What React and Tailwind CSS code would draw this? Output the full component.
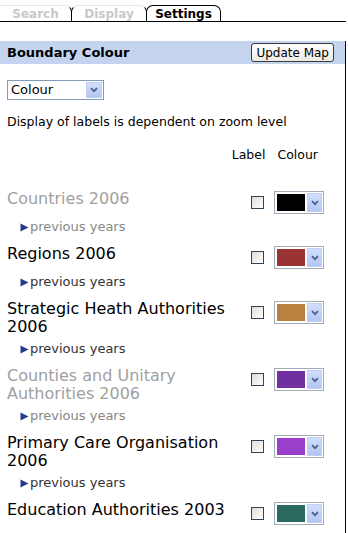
import React from 'react';

const layers = [
  { name: ['Countries 2006'], on: false, color: '#000000' },
  { name: ['Regions 2006'], on: true, color: '#9a3334' },
  { name: ['Strategic Heath Authorities', '2006'], on: true, color: '#b8813f' },
  { name: ['Counties and Unitary', 'Authorities 2006'], on: false, color: '#7030a0' },
  { name: ['Primary Care Organisation', '2006'], on: true, color: '#9a3fcc' },
  { name: ['Education Authorities 2003'], on: true, color: '#2a6a5e', last: true },
];

function Chevron() {
  return (
    <svg width="8" height="6" viewBox="0 0 8 6">
      <path d="M1 1.2 L4 4.2 L7 1.2" fill="none" stroke="#4d6185" strokeWidth="1.8" />
    </svg>
  );
}

function ArrowBox({ className = '' }) {
  return (
    <div className={'flex items-center justify-center bg-gradient-to-b from-[#d3defc] to-[#b2c6f4] border border-[#c0cff3] ' + className}>
      <Chevron />
    </div>
  );
}

function Checkbox() {
  return <div className="w-[13px] h-[13px] border border-[#2c4660] bg-gradient-to-br from-[#dcdcd7] to-white" />;
}

function ColourSelect({ color }) {
  return (
    <div className="w-[50px] h-[23px] border border-[#a3abb6] bg-white flex">
      <div className="flex-1 m-[2px] mb-[2px]" style={{ backgroundColor: color }} />
      <ArrowBox className="w-[15px] my-px mr-px" />
    </div>
  );
}

function Tab({ label, active, className = '' }) {
  return (
    <div
      className={
        'h-[16px] flex items-center justify-center rounded-t-[7px] border-x border-t text-[12px] font-bold leading-none ' +
        (active ? 'border-black text-black' : 'border-x-black border-t-[#e6e6e6] text-[#c8c8c8]') +
        ' ' + className
      }
    >
      {label}
    </div>
  );
}

function LayerRow({ layer }) {
  const text = layer.on ? 'text-black' : 'text-[#a0a0a0]';
  return (
    <div>
      <div className="flex items-start">
        <div className={'w-[243px] pl-[7px] text-[16px] leading-[18px] ' + text}>
          {layer.name.map((l, i) => (
            <div key={i}>{l}</div>
          ))}
        </div>
        <div className="flex items-center ml-[8px] gap-[10px] pt-px">
          <Checkbox />
          <ColourSelect color={layer.color} />
        </div>
      </div>
      {!layer.last && (
        <div className="flex items-center ml-[20px] mt-[6px] mb-[11px] h-[14px]">
          <svg width="9" height="9" viewBox="0 0 9 9" className="mr-px">
            <path d="M0.5 0.5 L8.5 4.5 L0.5 8.5 Z" fill="#283a8c" />
          </svg>
          <span className={'text-[13px] leading-[14px] ' + (layer.on ? 'text-[#333]' : 'text-[#888]')}>previous years</span>
        </div>
      )}
    </div>
  );
}

export default function App() {
  return (
    <div className="w-[348px] h-[533px] overflow-hidden bg-white font-['DejaVu_Sans',sans-serif]">
      <div className="w-[346px]">
        <div className="h-[22px] border-b border-black flex items-end">
          <Tab label="Search" className="w-[72px] border-l-0 rounded-tl-none" />
          <Tab label="Display" className="w-[76px] -ml-px" />
          <Tab label="Settings" active className="w-[75px] -ml-px" />
        </div>
        <div className="border-r border-black h-[520px]">
          <div className="mt-[19px] h-[23px] bg-[#c4d4ee] flex items-center justify-between pl-[7px] pr-[11px]">
            <span className="text-[13px] font-bold">Boundary Colour</span>
            <button className="h-[19px] px-[4px] border border-[#3a3a3a] rounded-[3px] bg-gradient-to-b from-white to-[#ecebe6] text-[12px] leading-none">
              Update Map
            </button>
          </div>
          <div className="mt-[16px] ml-[7px] w-[97px] h-[20px] border border-[#7f9db9] flex">
            <span className="flex-1 pl-[3px] text-[13px] leading-[18px]">Colour</span>
            <ArrowBox className="w-[16px] my-px mr-px" />
          </div>
          <div className="mt-[14px] pl-[7px] text-[12.5px] leading-[15px]">Display of labels is dependent on zoom level</div>
          <div className="mt-[18px] flex justify-end gap-[12px] pr-[27px] text-[12.5px] leading-[15px]">
            <span>Label</span>
            <span>Colour</span>
          </div>
          <div className="mt-[28px]">
            {layers.map((l, i) => (
              <LayerRow key={i} layer={l} />
            ))}
          </div>
        </div>
      </div>
    </div>
  );
}
